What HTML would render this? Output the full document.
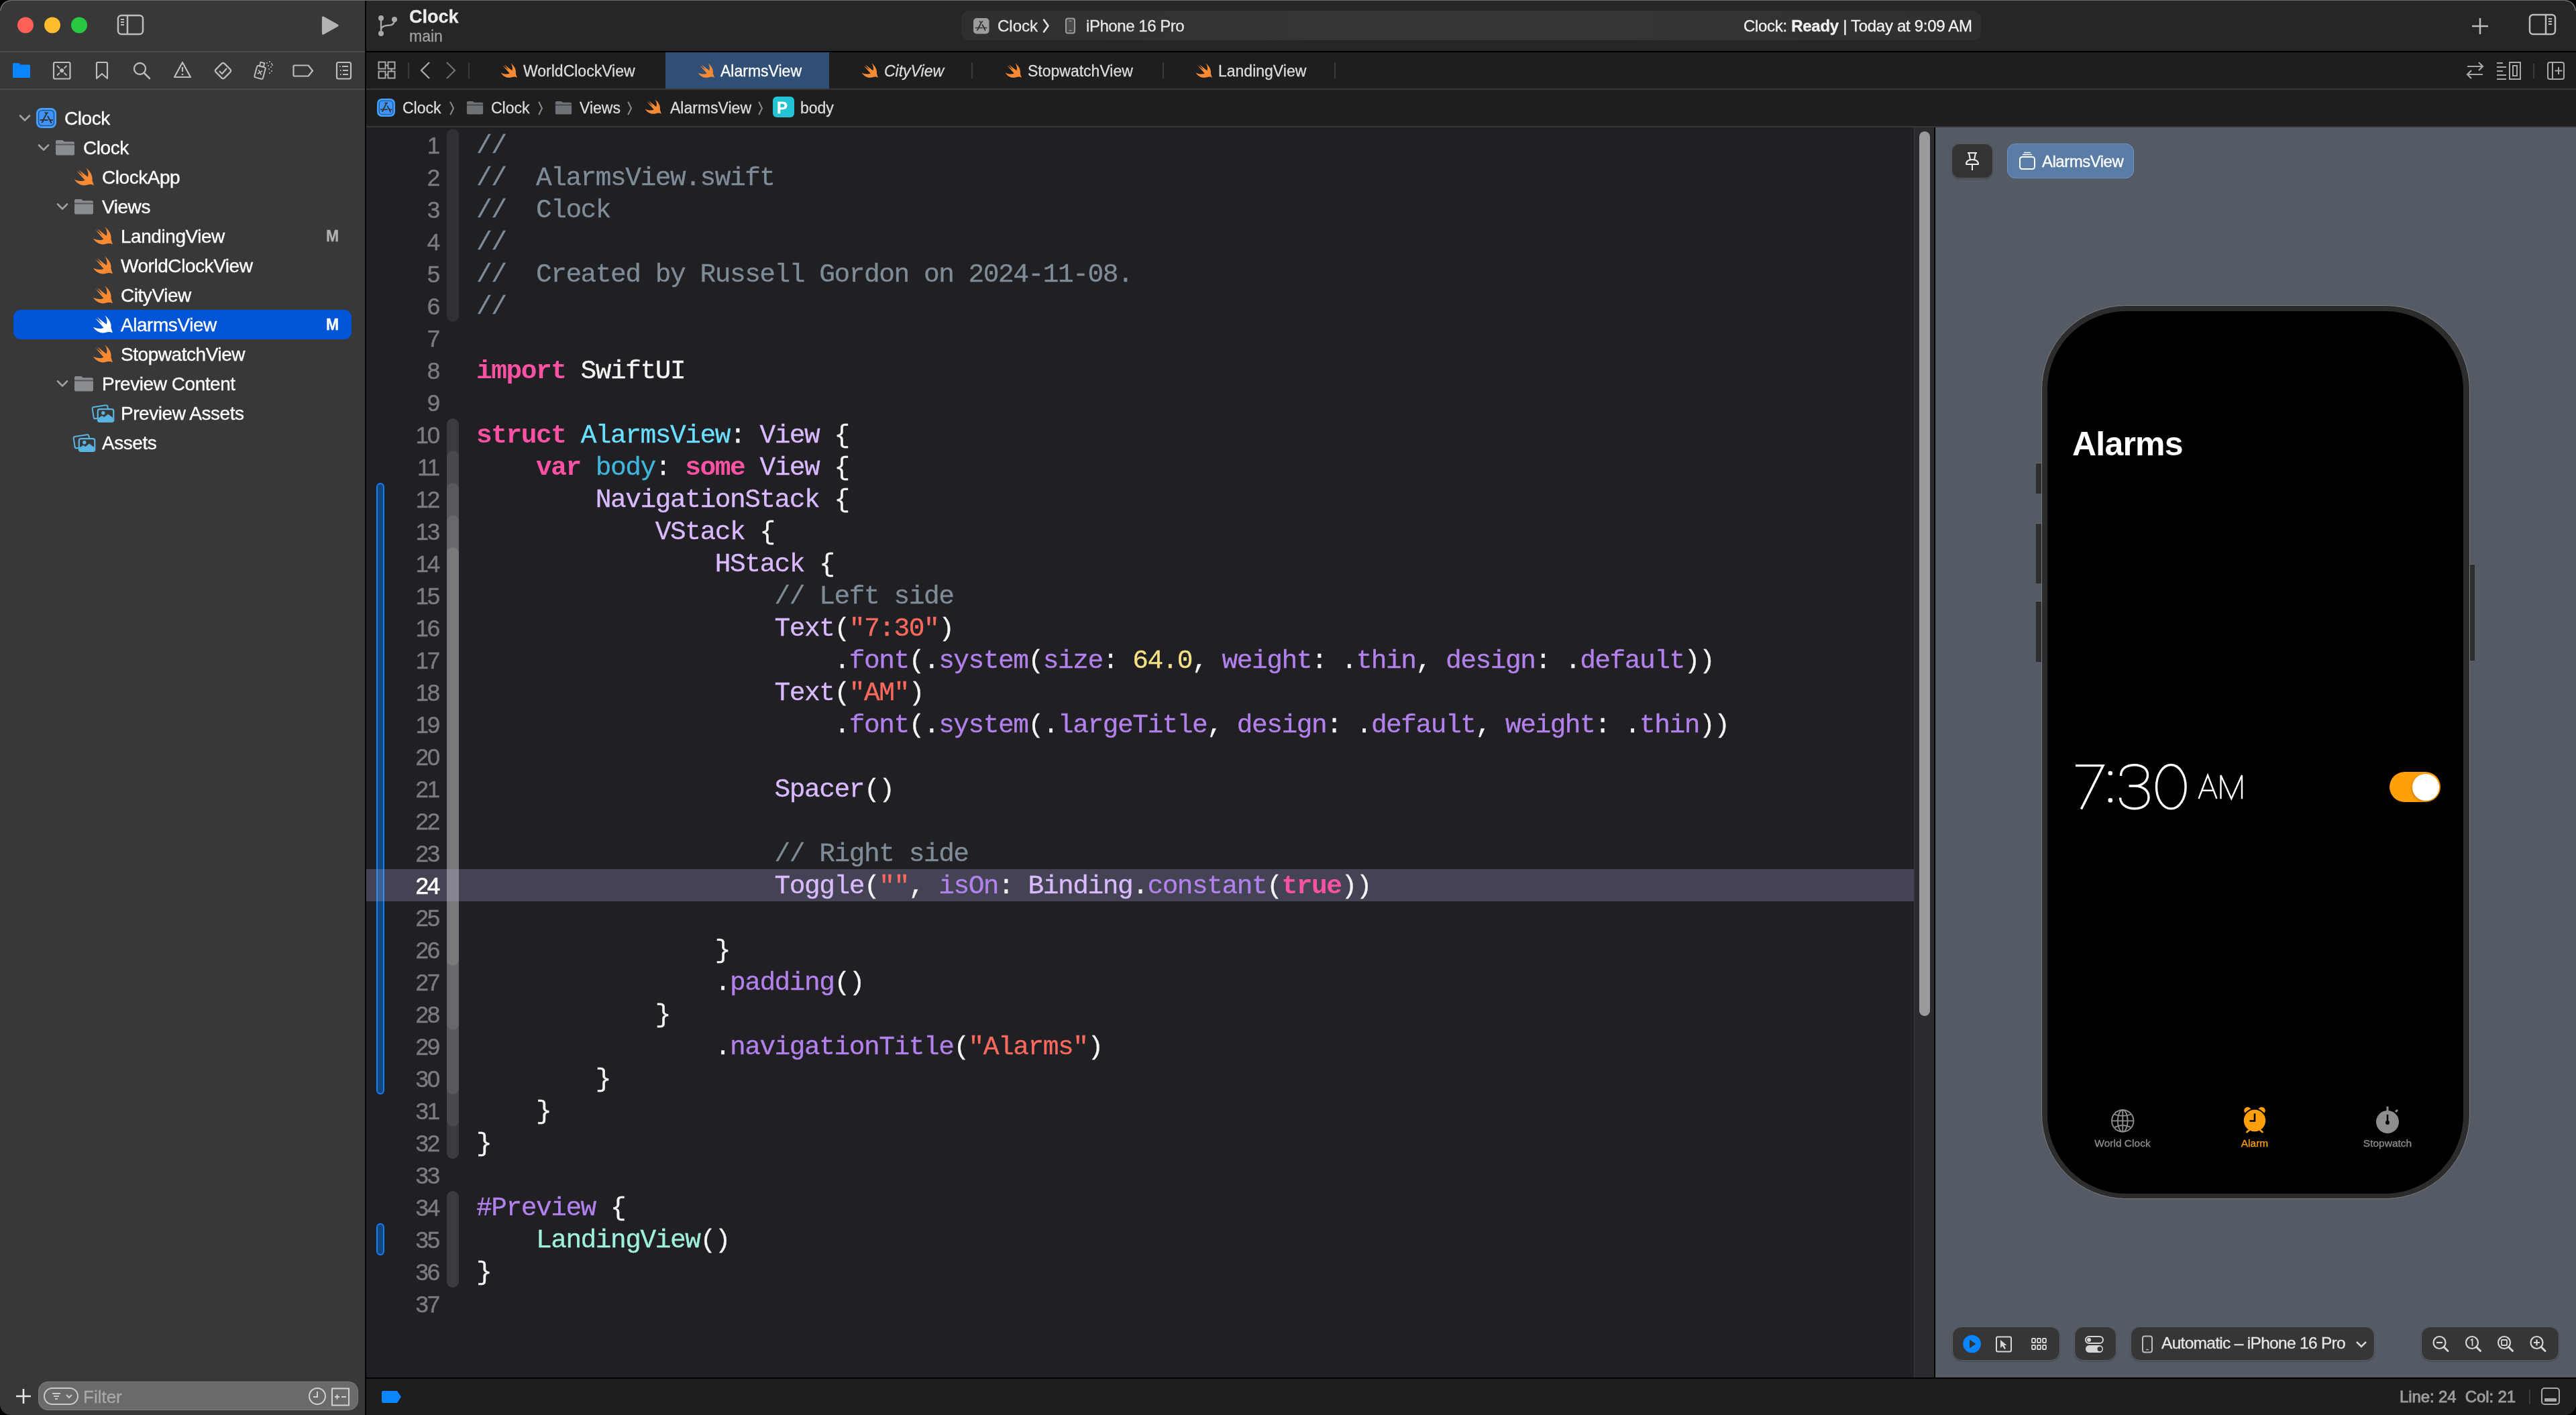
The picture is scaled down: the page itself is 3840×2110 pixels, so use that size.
<!DOCTYPE html>
<html><head><meta charset="utf-8"><title>Xcode</title><style>
*{margin:0;padding:0;box-sizing:border-box}
html,body{width:3840px;height:2110px;overflow:hidden;background:#1e1e1e;font-family:'Liberation Sans', sans-serif;}
.a{position:absolute}
.t{position:absolute;white-space:pre;line-height:1;-webkit-text-stroke-width:0.3px}
</style></head>
<body><div style="position:absolute;left:0;top:0;width:3840px;height:2110px;will-change:transform">
<div class="a" style="left:0px;top:0px;width:544px;height:2110px;background:#383838;"></div>
<div class="a" style="left:544px;top:0px;width:2px;height:2110px;background:#000;"></div>
<svg class="a" style="left:0px;top:0px;" width="160" height="76" viewBox="0 0 160 76"><circle cx="38" cy="37.6" r="12" fill="#ff5f57"/><circle cx="78" cy="37.6" r="12" fill="#febc2e"/><circle cx="118" cy="37.6" r="12" fill="#28c840"/></svg>
<svg class="a" style="left:170px;top:18px;" width="50" height="40" viewBox="0 0 50 40"><rect x="6" y="5" width="37" height="28" rx="5" fill="none" stroke="#bdbdbd" stroke-width="2.5"/><line x1="20" y1="5" x2="20" y2="33" stroke="#bdbdbd" stroke-width="2.5"/><line x1="10" y1="11" x2="15" y2="11" stroke="#bdbdbd" stroke-width="2"/><line x1="10" y1="15" x2="15" y2="15" stroke="#bdbdbd" stroke-width="2"/><line x1="10" y1="19" x2="15" y2="19" stroke="#bdbdbd" stroke-width="2"/></svg>
<svg class="a" style="left:470px;top:18px;" width="44" height="40" viewBox="0 0 44 40"><path d="M11.5 8 L33 20 L11.5 32 Z" fill="#b4b4b4" stroke="#b4b4b4" stroke-width="3.2" stroke-linejoin="round"/></svg>
<div class="a" style="left:0px;top:76px;width:544px;height:2px;background:#4a4a4a;"></div>
<div class="a" style="left:0px;top:132px;width:544px;height:2px;background:#4a4a4a;"></div>
<svg class="a" style="left:0px;top:0px;" width="544" height="134" viewBox="0 0 544 134"><path d="M19 95.5 Q19 94 20.5 94 L28 94 L31 96.5 L43.5 96.5 Q45 96.5 45 98 L45 114.5 Q45 116 43.5 116 L20.5 116 Q19 116 19 114.5 Z" fill="#0a84ff"/><rect x="19" y="98.5" width="26" height="17.5" rx="1.5" fill="#0a84ff"/><rect x="80" y="93" width="24.5" height="24.5" rx="2" fill="none" stroke="#bdbdbd" stroke-width="2.2"/><circle cx="92.2" cy="105.2" r="3" fill="#bdbdbd"/><path d="M85 98 L89 102 M99.5 98 L95.5 102 M85 112.5 L89 108.5 M99.5 112.5 L95.5 108.5" stroke="#bdbdbd" stroke-width="1.8"/><path d="M144 94.5 Q144 93 145.5 93 L158.5 93 Q160 93 160 94.5 L160 117 L152 110 L144 117 Z" fill="none" stroke="#bdbdbd" stroke-width="2.2" stroke-linejoin="round"/><circle cx="208.5" cy="102.5" r="8.5" fill="none" stroke="#bdbdbd" stroke-width="2.3"/><line x1="214.5" y1="108.5" x2="223" y2="117" stroke="#bdbdbd" stroke-width="2.5" stroke-linecap="round"/><path d="M272 93 L284 115 L260 115 Z" fill="none" stroke="#bdbdbd" stroke-width="2.2" stroke-linejoin="round"/><line x1="272" y1="100" x2="272" y2="107" stroke="#bdbdbd" stroke-width="2.2"/><circle cx="272" cy="111" r="1.3" fill="#bdbdbd"/><rect x="323.5" y="96.5" width="18" height="18" rx="3" transform="rotate(45 332.5 105.5)" fill="none" stroke="#bdbdbd" stroke-width="2.2"/><path d="M327 106 L331 110 L338 102" fill="none" stroke="#bdbdbd" stroke-width="2.2"/><g transform="rotate(15 388 108)"><rect x="381" y="99" width="13" height="18" rx="2" fill="none" stroke="#bdbdbd" stroke-width="2"/><rect x="384.5" y="93" width="6" height="6" fill="none" stroke="#bdbdbd" stroke-width="1.8"/><path d="M384.5 105 L390.5 111 M390.5 105 L384.5 111" stroke="#bdbdbd" stroke-width="1.6"/></g><g fill="#bdbdbd"><circle cx="398" cy="94" r="1"/><circle cx="402" cy="92" r="1"/><circle cx="405" cy="95" r="1"/><circle cx="400" cy="98" r="1"/><circle cx="404" cy="100" r="1"/><circle cx="401" cy="103" r="1"/><circle cx="405" cy="106" r="1"/><circle cx="402" cy="109" r="1"/><circle cx="406" cy="97" r="1"/></g><path d="M439 97.5 Q437.5 97.5 437.5 99 L437.5 112 Q437.5 113.5 439 113.5 L459.5 113.5 L466 105.5 L459.5 97.5 Z" fill="none" stroke="#bdbdbd" stroke-width="2.2" stroke-linejoin="round"/><rect x="502" y="93" width="21" height="24.5" rx="2.5" fill="none" stroke="#bdbdbd" stroke-width="2.2"/><g stroke="#bdbdbd" stroke-width="2"><line x1="506" y1="99" x2="507.5" y2="99"/><line x1="510" y1="99" x2="519" y2="99"/><line x1="507" y1="105" x2="508.5" y2="105"/><line x1="511" y1="105" x2="519" y2="105"/><line x1="507" y1="111" x2="508.5" y2="111"/><line x1="511" y1="111" x2="519" y2="111"/></g></svg>
<div class="a" style="left:20px;top:462px;width:504px;height:44px;background:#0054d6;border-radius:11px"></div>
<svg class="a" style="left:28px;top:170px" width="18" height="12" viewBox="0 0 18 12"><path d="M2 2.5 L9 9.5 L16 2.5" fill="none" stroke="#a0a0a0" stroke-width="2.6" stroke-linecap="round" stroke-linejoin="round"/></svg>
<svg class="a" style="left:54px;top:161px" width="30" height="30" viewBox="0 0 30 30"><rect x="1" y="1" width="28" height="28" rx="7" fill="#3f95fd" stroke="#45a2ff" stroke-width="2"/><rect x="3.6" y="3.6" width="22.8" height="22.8" rx="5" fill="none" stroke="#24507f" stroke-width="1.3"/><path d="M13.4 7 L15.2 8.8 M16.9 7 L15.2 8.8 L10.7 17.2 M17.4 12.6 L22.3 22 M6.6 18.1 L16.8 18.1 M20.4 18.1 L24 18.1 M8.6 21.3 L10.2 19.8" stroke="#333" stroke-width="2" stroke-linecap="round" fill="none"/></svg>
<div class="t" style="left:96px;top:162.79px;font-size:28px;color:#ffffff;font-weight:400;font-family:'Liberation Sans', sans-serif;letter-spacing:-0.45px;-webkit-text-stroke:0.35px #fff">Clock</div>
<svg class="a" style="left:56px;top:214px" width="18" height="12" viewBox="0 0 18 12"><path d="M2 2.5 L9 9.5 L16 2.5" fill="none" stroke="#a0a0a0" stroke-width="2.6" stroke-linecap="round" stroke-linejoin="round"/></svg>
<svg class="a" style="left:82px;top:208px" width="30" height="24" viewBox="0 0 30 24" preserveAspectRatio="none"><path d="M1 3 Q1 1 3 1 L10.5 1 Q11.5 1 12.5 2 L14 3.2 L27 3.2 Q29 3.2 29 5.2 L29 21.5 Q29 23.5 27 23.5 L3 23.5 Q1 23.5 1 21.5 Z" fill="#888b8f"/><rect x="1" y="6.5" width="28" height="2" fill="#000" fill-opacity="0.38"/></svg>
<div class="t" style="left:124px;top:206.79px;font-size:28px;color:#ffffff;font-weight:400;font-family:'Liberation Sans', sans-serif;letter-spacing:-0.45px;-webkit-text-stroke:0.35px #fff">Clock</div>
<svg class="a" style="left:110px;top:249px" width="30" height="30" viewBox="0 0 30 30"><path d="M18.5 1.5 C24 6 28.5 12 27.5 20 L30 27.5 C27 25.5 24 25.5 19 27 C12 28.5 5 25.5 0.8 18.5 C5 21 12 22 16.5 19.8 L4 5.5 L14.6 13.6 L7 4 L20.8 14.8 C22.3 11 21.5 6 18.5 1.5 Z" fill="#f88a34"/></svg>
<div class="t" style="left:152px;top:250.79px;font-size:28px;color:#ffffff;font-weight:400;font-family:'Liberation Sans', sans-serif;letter-spacing:-0.45px;-webkit-text-stroke:0.35px #fff">ClockApp</div>
<svg class="a" style="left:84px;top:302px" width="18" height="12" viewBox="0 0 18 12"><path d="M2 2.5 L9 9.5 L16 2.5" fill="none" stroke="#a0a0a0" stroke-width="2.6" stroke-linecap="round" stroke-linejoin="round"/></svg>
<svg class="a" style="left:110px;top:296px" width="30" height="24" viewBox="0 0 30 24" preserveAspectRatio="none"><path d="M1 3 Q1 1 3 1 L10.5 1 Q11.5 1 12.5 2 L14 3.2 L27 3.2 Q29 3.2 29 5.2 L29 21.5 Q29 23.5 27 23.5 L3 23.5 Q1 23.5 1 21.5 Z" fill="#888b8f"/><rect x="1" y="6.5" width="28" height="2" fill="#000" fill-opacity="0.38"/></svg>
<div class="t" style="left:152px;top:294.79px;font-size:28px;color:#ffffff;font-weight:400;font-family:'Liberation Sans', sans-serif;letter-spacing:-0.45px;-webkit-text-stroke:0.35px #fff">Views</div>
<svg class="a" style="left:138px;top:337px" width="30" height="30" viewBox="0 0 30 30"><path d="M18.5 1.5 C24 6 28.5 12 27.5 20 L30 27.5 C27 25.5 24 25.5 19 27 C12 28.5 5 25.5 0.8 18.5 C5 21 12 22 16.5 19.8 L4 5.5 L14.6 13.6 L7 4 L20.8 14.8 C22.3 11 21.5 6 18.5 1.5 Z" fill="#f88a34"/></svg>
<div class="t" style="left:180px;top:338.79px;font-size:28px;color:#ffffff;font-weight:400;font-family:'Liberation Sans', sans-serif;letter-spacing:-0.45px;-webkit-text-stroke:0.35px #fff">LandingView</div>
<div class="t" style="left:486px;top:341.03px;font-size:23px;color:#b0b0b0;font-weight:700;font-family:'Liberation Sans', sans-serif;">M</div>
<svg class="a" style="left:138px;top:381px" width="30" height="30" viewBox="0 0 30 30"><path d="M18.5 1.5 C24 6 28.5 12 27.5 20 L30 27.5 C27 25.5 24 25.5 19 27 C12 28.5 5 25.5 0.8 18.5 C5 21 12 22 16.5 19.8 L4 5.5 L14.6 13.6 L7 4 L20.8 14.8 C22.3 11 21.5 6 18.5 1.5 Z" fill="#f88a34"/></svg>
<div class="t" style="left:180px;top:382.79px;font-size:28px;color:#ffffff;font-weight:400;font-family:'Liberation Sans', sans-serif;letter-spacing:-0.45px;-webkit-text-stroke:0.35px #fff">WorldClockView</div>
<svg class="a" style="left:138px;top:425px" width="30" height="30" viewBox="0 0 30 30"><path d="M18.5 1.5 C24 6 28.5 12 27.5 20 L30 27.5 C27 25.5 24 25.5 19 27 C12 28.5 5 25.5 0.8 18.5 C5 21 12 22 16.5 19.8 L4 5.5 L14.6 13.6 L7 4 L20.8 14.8 C22.3 11 21.5 6 18.5 1.5 Z" fill="#f88a34"/></svg>
<div class="t" style="left:180px;top:426.79px;font-size:28px;color:#ffffff;font-weight:400;font-family:'Liberation Sans', sans-serif;letter-spacing:-0.45px;-webkit-text-stroke:0.35px #fff">CityView</div>
<svg class="a" style="left:138px;top:469px" width="30" height="30" viewBox="0 0 30 30"><path d="M18.5 1.5 C24 6 28.5 12 27.5 20 L30 27.5 C27 25.5 24 25.5 19 27 C12 28.5 5 25.5 0.8 18.5 C5 21 12 22 16.5 19.8 L4 5.5 L14.6 13.6 L7 4 L20.8 14.8 C22.3 11 21.5 6 18.5 1.5 Z" fill="#ffffff"/></svg>
<div class="t" style="left:180px;top:470.79px;font-size:28px;color:#ffffff;font-weight:400;font-family:'Liberation Sans', sans-serif;letter-spacing:-0.45px;-webkit-text-stroke:0.35px #fff">AlarmsView</div>
<div class="t" style="left:486px;top:473.03px;font-size:23px;color:#ffffff;font-weight:700;font-family:'Liberation Sans', sans-serif;">M</div>
<svg class="a" style="left:138px;top:513px" width="30" height="30" viewBox="0 0 30 30"><path d="M18.5 1.5 C24 6 28.5 12 27.5 20 L30 27.5 C27 25.5 24 25.5 19 27 C12 28.5 5 25.5 0.8 18.5 C5 21 12 22 16.5 19.8 L4 5.5 L14.6 13.6 L7 4 L20.8 14.8 C22.3 11 21.5 6 18.5 1.5 Z" fill="#f88a34"/></svg>
<div class="t" style="left:180px;top:514.79px;font-size:28px;color:#ffffff;font-weight:400;font-family:'Liberation Sans', sans-serif;letter-spacing:-0.45px;-webkit-text-stroke:0.35px #fff">StopwatchView</div>
<svg class="a" style="left:84px;top:566px" width="18" height="12" viewBox="0 0 18 12"><path d="M2 2.5 L9 9.5 L16 2.5" fill="none" stroke="#a0a0a0" stroke-width="2.6" stroke-linecap="round" stroke-linejoin="round"/></svg>
<svg class="a" style="left:110px;top:560px" width="30" height="24" viewBox="0 0 30 24" preserveAspectRatio="none"><path d="M1 3 Q1 1 3 1 L10.5 1 Q11.5 1 12.5 2 L14 3.2 L27 3.2 Q29 3.2 29 5.2 L29 21.5 Q29 23.5 27 23.5 L3 23.5 Q1 23.5 1 21.5 Z" fill="#888b8f"/><rect x="1" y="6.5" width="28" height="2" fill="#000" fill-opacity="0.38"/></svg>
<div class="t" style="left:152px;top:558.79px;font-size:28px;color:#ffffff;font-weight:400;font-family:'Liberation Sans', sans-serif;letter-spacing:-0.45px;-webkit-text-stroke:0.35px #fff">Preview Content</div>
<svg class="a" style="left:135px;top:602px" width="38" height="30" viewBox="0 0 38 30"><rect x="3.5" y="3.5" width="23" height="17.5" rx="2.5" transform="rotate(-9 15 12)" fill="none" stroke="#5ab4e0" stroke-width="2"/><rect x="10.8" y="8.2" width="23.5" height="18.8" rx="3" fill="#383838" stroke="#5ab4e0" stroke-width="2.2"/><circle cx="18.8" cy="13.8" r="2.7" fill="#5ab4e0"/><path d="M11.5 26 L11.5 21.5 L17 18 L20.5 20 L26 15.5 L33.5 21 L33.5 26 Z" fill="#5ab4e0"/></svg>
<div class="t" style="left:180px;top:602.79px;font-size:28px;color:#ffffff;font-weight:400;font-family:'Liberation Sans', sans-serif;letter-spacing:-0.45px;-webkit-text-stroke:0.35px #fff">Preview Assets</div>
<svg class="a" style="left:107px;top:646px" width="38" height="30" viewBox="0 0 38 30"><rect x="3.5" y="3.5" width="23" height="17.5" rx="2.5" transform="rotate(-9 15 12)" fill="none" stroke="#5ab4e0" stroke-width="2"/><rect x="10.8" y="8.2" width="23.5" height="18.8" rx="3" fill="#383838" stroke="#5ab4e0" stroke-width="2.2"/><circle cx="18.8" cy="13.8" r="2.7" fill="#5ab4e0"/><path d="M11.5 26 L11.5 21.5 L17 18 L20.5 20 L26 15.5 L33.5 21 L33.5 26 Z" fill="#5ab4e0"/></svg>
<div class="t" style="left:152px;top:646.79px;font-size:28px;color:#ffffff;font-weight:400;font-family:'Liberation Sans', sans-serif;letter-spacing:-0.45px;-webkit-text-stroke:0.35px #fff">Assets</div>
<div class="a" style="left:57px;top:2060px;width:477px;height:43px;background:#6a6a6a;border:1px solid #7c7c7c;border-radius:14px"></div>
<svg class="a" style="left:20px;top:2068px;" width="30" height="30" viewBox="0 0 30 30"><path d="M4 14 L26 14 M15 3 L15 25" stroke="#e6e6e6" stroke-width="2.6"/></svg>
<div class="a" style="left:65px;top:2069px;width:52px;height:26px;border:2px solid #c9c9c9;border-radius:13px"></div>
<svg class="a" style="left:65px;top:2069px;" width="52" height="26" viewBox="0 0 52 26"><path d="M13 9 L25 9 M15 13 L23 13 M17 17 L21 17" stroke="#c9c9c9" stroke-width="1.8"/><path d="M34 11 L38 15 L42 11" fill="none" stroke="#c9c9c9" stroke-width="2"/></svg>
<div class="t" style="left:124px;top:2069.99px;font-size:26px;color:#a8a8a8;font-weight:400;font-family:'Liberation Sans', sans-serif;">Filter</div>
<svg class="a" style="left:458px;top:2068px;" width="30" height="30" viewBox="0 0 30 30"><circle cx="15" cy="14" r="12" fill="none" stroke="#d0d0d0" stroke-width="2"/><path d="M15 7 L15 15 L9 15" fill="none" stroke="#d0d0d0" stroke-width="2"/></svg>
<svg class="a" style="left:493px;top:2069px;" width="30" height="30" viewBox="0 0 30 30"><rect x="2" y="1.5" width="25" height="25" fill="none" stroke="#d0d0d0" stroke-width="2"/><path d="M6 14 L13 14 M9.5 10.5 L9.5 17.5 M16 14 L23 14" stroke="#d0d0d0" stroke-width="2"/></svg>
<div class="a" style="left:546px;top:0px;width:3294px;height:76px;background:#262626;"></div>
<div class="a" style="left:546px;top:76px;width:3294px;height:2px;background:#000;"></div>
<svg class="a" style="left:560px;top:18px;" width="40" height="40" viewBox="0 0 40 40"><circle cx="8" cy="9" r="4" fill="#a8a8a8"/><circle cx="8" cy="32" r="4" fill="#a8a8a8"/><circle cx="28" cy="11" r="4" fill="#a8a8a8"/><path d="M8 9 L8 32 M8 27 C8 21 14 20 22 19.5 C26 19 28 16 28 11" fill="none" stroke="#a8a8a8" stroke-width="2.4"/></svg>
<div class="t" style="left:610px;top:12.14px;font-size:27px;color:#ececec;font-weight:700;font-family:'Liberation Sans', sans-serif;">Clock</div>
<div class="t" style="left:610px;top:42.53px;font-size:23px;color:#a0a0a0;font-weight:400;font-family:'Liberation Sans', sans-serif;">main</div>
<div class="a" style="left:1433px;top:16px;width:1520px;height:44px;border-radius:12px;background:linear-gradient(90deg,#2f2f2f,#363636 40%,#363636 60%,#2f2f2f)"></div>
<svg class="a" style="left:1450px;top:26px;" width="26" height="26" viewBox="0 0 26 26"><rect x="1" y="1" width="23.5" height="23.5" rx="5" fill="#9c9c9c"/><path d="M10.5 6 L12.5 8 M14.5 6 L12.5 8 L8.5 16 M14.5 11 L18.5 19 M4.5 15.5 L14 15.5 M17 15.5 L20.5 15.5 M6.5 19 L8 17.5" stroke="#2e2e2e" stroke-width="1.7" stroke-linecap="round" fill="none"/></svg>
<div class="t" style="left:1487px;top:26.68px;font-size:24px;color:#e6e6e6;font-weight:400;font-family:'Liberation Sans', sans-serif;">Clock</div>
<svg class="a" style="left:1553px;top:27px;" width="14" height="24" viewBox="0 0 14 24"><path d="M3 2.5 L9.5 11.5 L3 20.5" fill="none" stroke="#e6e6e6" stroke-width="2.6" stroke-linecap="round" stroke-linejoin="round"/></svg>
<svg class="a" style="left:1586px;top:25px;" width="20" height="28" viewBox="0 0 20 28"><rect x="3" y="2.5" width="13" height="22" rx="3" fill="#4a4a4a" stroke="#9c9c9c" stroke-width="2"/><line x1="7.5" y1="6.5" x2="11.5" y2="6.5" stroke="#9c9c9c" stroke-width="1.2"/><line x1="7.5" y1="20.5" x2="11.5" y2="20.5" stroke="#9c9c9c" stroke-width="1.2"/></svg>
<div class="t" style="left:1619px;top:26.68px;font-size:24px;color:#e6e6e6;font-weight:400;font-family:'Liberation Sans', sans-serif;letter-spacing:-0.45px">iPhone 16 Pro</div>
<div class="t" style="left:2599px;top:26.7px;font-size:24px;color:#f2f2f2;letter-spacing:-0.3px">Clock: <b>Ready</b> | Today at 9:09 AM</div>
<svg class="a" style="left:3680px;top:22px;" width="34" height="34" viewBox="0 0 34 34"><path d="M17 5 L17 29 M5 17 L29 17" stroke="#bdbdbd" stroke-width="2.5"/></svg>
<svg class="a" style="left:3766px;top:18px;" width="48" height="40" viewBox="0 0 48 40"><rect x="5" y="4" width="38" height="29" rx="5" fill="none" stroke="#bdbdbd" stroke-width="2.5"/><line x1="29" y1="4" x2="29" y2="33" stroke="#bdbdbd" stroke-width="2.5"/><line x1="33" y1="10" x2="38" y2="10" stroke="#bdbdbd" stroke-width="2"/><line x1="33" y1="14" x2="38" y2="14" stroke="#bdbdbd" stroke-width="2"/><line x1="33" y1="18" x2="38" y2="18" stroke="#bdbdbd" stroke-width="2"/></svg>
<div class="a" style="left:546px;top:78px;width:3294px;height:54px;background:#1e1e1e;"></div>
<div class="a" style="left:546px;top:132px;width:3294px;height:2px;background:#353535;"></div>
<svg class="a" style="left:560px;top:88px;" width="36" height="34" viewBox="0 0 36 34"><g fill="none" stroke="#a8a8a8" stroke-width="2"><rect x="4.5" y="4.5" width="10" height="10"/><rect x="18.5" y="4.5" width="10" height="10"/><rect x="4.5" y="18.5" width="10" height="10"/><rect x="18.5" y="18.5" width="10" height="10"/></g><path d="M14.5 9.5 L18.5 9.5 M23.5 14.5 L23.5 18.5 M14.5 23.5 L18.5 23.5" stroke="#a8a8a8" stroke-width="2"/></svg>
<div class="a" style="left:608px;top:93px;width:2px;height:24px;background:#3a3a3a;"></div>
<svg class="a" style="left:620px;top:88px;" width="66" height="34" viewBox="0 0 66 34"><path d="M20 5 L8 17 L20 29" fill="none" stroke="#a8a8a8" stroke-width="2.4"/><path d="M46 5 L58 17 L46 29" fill="none" stroke="#6e6e6e" stroke-width="2.4"/></svg>
<div class="a" style="left:698px;top:93px;width:2px;height:24px;background:#3a3a3a;"></div>
<div class="a" style="left:992px;top:78px;width:244px;height:54px;background:#2f4f74;"></div>
<div class="a" style="left:1448px;top:93px;width:2px;height:24px;background:#3a3a3a;"></div>
<div class="a" style="left:1733px;top:93px;width:2px;height:24px;background:#3a3a3a;"></div>
<div class="a" style="left:1989px;top:93px;width:2px;height:24px;background:#3a3a3a;"></div>
<svg class="a" style="left:746px;top:93px" width="25" height="25" viewBox="0 0 30 30"><path d="M18.5 1.5 C24 6 28.5 12 27.5 20 L30 27.5 C27 25.5 24 25.5 19 27 C12 28.5 5 25.5 0.8 18.5 C5 21 12 22 16.5 19.8 L4 5.5 L14.6 13.6 L7 4 L20.8 14.8 C22.3 11 21.5 6 18.5 1.5 Z" fill="#f88a34"/></svg>
<div class="t" style="left:780px;top:94.53px;font-size:23px;color:#dcdcdc;font-weight:400;font-family:'Liberation Sans', sans-serif;">WorldClockView</div>
<svg class="a" style="left:1040px;top:93px" width="25" height="25" viewBox="0 0 30 30"><path d="M18.5 1.5 C24 6 28.5 12 27.5 20 L30 27.5 C27 25.5 24 25.5 19 27 C12 28.5 5 25.5 0.8 18.5 C5 21 12 22 16.5 19.8 L4 5.5 L14.6 13.6 L7 4 L20.8 14.8 C22.3 11 21.5 6 18.5 1.5 Z" fill="#f88a34"/></svg>
<div class="t" style="left:1074px;top:94.53px;font-size:23px;color:#ffffff;font-weight:400;font-family:'Liberation Sans', sans-serif;">AlarmsView</div>
<svg class="a" style="left:1284px;top:93px" width="25" height="25" viewBox="0 0 30 30"><path d="M18.5 1.5 C24 6 28.5 12 27.5 20 L30 27.5 C27 25.5 24 25.5 19 27 C12 28.5 5 25.5 0.8 18.5 C5 21 12 22 16.5 19.8 L4 5.5 L14.6 13.6 L7 4 L20.8 14.8 C22.3 11 21.5 6 18.5 1.5 Z" fill="#f88a34"/></svg>
<div class="t" style="left:1318px;top:94.53px;font-size:23px;color:#dcdcdc;font-weight:400;font-family:'Liberation Sans', sans-serif;font-style:italic;">CityView</div>
<svg class="a" style="left:1498px;top:93px" width="25" height="25" viewBox="0 0 30 30"><path d="M18.5 1.5 C24 6 28.5 12 27.5 20 L30 27.5 C27 25.5 24 25.5 19 27 C12 28.5 5 25.5 0.8 18.5 C5 21 12 22 16.5 19.8 L4 5.5 L14.6 13.6 L7 4 L20.8 14.8 C22.3 11 21.5 6 18.5 1.5 Z" fill="#f88a34"/></svg>
<div class="t" style="left:1532px;top:94.53px;font-size:23px;color:#dcdcdc;font-weight:400;font-family:'Liberation Sans', sans-serif;">StopwatchView</div>
<svg class="a" style="left:1782px;top:93px" width="25" height="25" viewBox="0 0 30 30"><path d="M18.5 1.5 C24 6 28.5 12 27.5 20 L30 27.5 C27 25.5 24 25.5 19 27 C12 28.5 5 25.5 0.8 18.5 C5 21 12 22 16.5 19.8 L4 5.5 L14.6 13.6 L7 4 L20.8 14.8 C22.3 11 21.5 6 18.5 1.5 Z" fill="#f88a34"/></svg>
<div class="t" style="left:1816px;top:94.53px;font-size:23px;color:#dcdcdc;font-weight:400;font-family:'Liberation Sans', sans-serif;">LandingView</div>
<svg class="a" style="left:3668px;top:86px;" width="172" height="40" viewBox="0 0 172 40"><path d="M10 13 L33 13 M27 7 L33 13 L27 19" fill="none" stroke="#a8a8a8" stroke-width="2.2"/><path d="M33 25 L10 25 M16 19 L10 25 L16 31" fill="none" stroke="#a8a8a8" stroke-width="2.2"/><g stroke="#a8a8a8" stroke-width="2"><line x1="54" y1="8" x2="63" y2="8"/><line x1="54" y1="14" x2="68" y2="14"/><line x1="54" y1="20" x2="63" y2="20"/><line x1="54" y1="26" x2="68" y2="26"/><line x1="54" y1="32" x2="68" y2="32"/></g><rect x="73" y="7" width="16" height="25" fill="none" stroke="#a8a8a8" stroke-width="2"/><rect x="78" y="12" width="6" height="15" fill="none" stroke="#a8a8a8" stroke-width="2"/><line x1="109" y1="9" x2="109" y2="31" stroke="#3a3a3a" stroke-width="2"/><rect x="130" y="7" width="24" height="25" rx="3" fill="none" stroke="#a8a8a8" stroke-width="2"/><line x1="137" y1="7" x2="137" y2="32" stroke="#a8a8a8" stroke-width="2"/><path d="M146 14 L146 25 M140.5 19.5 L151.5 19.5" stroke="#a8a8a8" stroke-width="2"/></svg>
<div class="a" style="left:546px;top:134px;width:3294px;height:54px;background:#1e1e1e;"></div>
<div class="a" style="left:546px;top:188px;width:3294px;height:2px;background:#353535;"></div>
<svg class="a" style="left:562px;top:147px" width="27" height="27" viewBox="0 0 30 30"><rect x="1" y="1" width="28" height="28" rx="7" fill="#3f95fd" stroke="#45a2ff" stroke-width="2"/><rect x="3.6" y="3.6" width="22.8" height="22.8" rx="5" fill="none" stroke="#24507f" stroke-width="1.3"/><path d="M13.4 7 L15.2 8.8 M16.9 7 L15.2 8.8 L10.7 17.2 M17.4 12.6 L22.3 22 M6.6 18.1 L16.8 18.1 M20.4 18.1 L24 18.1 M8.6 21.3 L10.2 19.8" stroke="#333" stroke-width="2" stroke-linecap="round" fill="none"/></svg>
<div class="t" style="left:600px;top:149.53px;font-size:23px;color:#dcdcdc;font-weight:400;font-family:'Liberation Sans', sans-serif;">Clock</div>
<svg class="a" style="left:669px;top:150px;" width="10" height="24" viewBox="0 0 10 24"><path d="M2.5 2.5 L7 11.5 L2.5 20.5" fill="none" stroke="#8c8c8c" stroke-width="2" stroke-linecap="round" stroke-linejoin="round"/></svg>
<svg class="a" style="left:695px;top:150px" width="26" height="21" viewBox="0 0 30 24" preserveAspectRatio="none"><path d="M1 3 Q1 1 3 1 L10.5 1 Q11.5 1 12.5 2 L14 3.2 L27 3.2 Q29 3.2 29 5.2 L29 21.5 Q29 23.5 27 23.5 L3 23.5 Q1 23.5 1 21.5 Z" fill="#6e7276"/><rect x="1" y="6.5" width="28" height="2" fill="#000" fill-opacity="0.38"/></svg>
<div class="t" style="left:732px;top:149.53px;font-size:23px;color:#dcdcdc;font-weight:400;font-family:'Liberation Sans', sans-serif;">Clock</div>
<svg class="a" style="left:801px;top:150px;" width="10" height="24" viewBox="0 0 10 24"><path d="M2.5 2.5 L7 11.5 L2.5 20.5" fill="none" stroke="#8c8c8c" stroke-width="2" stroke-linecap="round" stroke-linejoin="round"/></svg>
<svg class="a" style="left:827px;top:150px" width="26" height="21" viewBox="0 0 30 24" preserveAspectRatio="none"><path d="M1 3 Q1 1 3 1 L10.5 1 Q11.5 1 12.5 2 L14 3.2 L27 3.2 Q29 3.2 29 5.2 L29 21.5 Q29 23.5 27 23.5 L3 23.5 Q1 23.5 1 21.5 Z" fill="#6e7276"/><rect x="1" y="6.5" width="28" height="2" fill="#000" fill-opacity="0.38"/></svg>
<div class="t" style="left:864px;top:149.53px;font-size:23px;color:#dcdcdc;font-weight:400;font-family:'Liberation Sans', sans-serif;">Views</div>
<svg class="a" style="left:934px;top:150px;" width="10" height="24" viewBox="0 0 10 24"><path d="M2.5 2.5 L7 11.5 L2.5 20.5" fill="none" stroke="#8c8c8c" stroke-width="2" stroke-linecap="round" stroke-linejoin="round"/></svg>
<svg class="a" style="left:961px;top:147px" width="25" height="25" viewBox="0 0 30 30"><path d="M18.5 1.5 C24 6 28.5 12 27.5 20 L30 27.5 C27 25.5 24 25.5 19 27 C12 28.5 5 25.5 0.8 18.5 C5 21 12 22 16.5 19.8 L4 5.5 L14.6 13.6 L7 4 L20.8 14.8 C22.3 11 21.5 6 18.5 1.5 Z" fill="#f88a34"/></svg>
<div class="t" style="left:999px;top:149.53px;font-size:23px;color:#dcdcdc;font-weight:400;font-family:'Liberation Sans', sans-serif;">AlarmsView</div>
<svg class="a" style="left:1129px;top:150px;" width="10" height="24" viewBox="0 0 10 24"><path d="M2.5 2.5 L7 11.5 L2.5 20.5" fill="none" stroke="#8c8c8c" stroke-width="2" stroke-linecap="round" stroke-linejoin="round"/></svg>
<div class="a" style="left:1152px;top:144px;width:32px;height:31px;background:#25c2d4;border-radius:6px"></div>
<div class="t" style="left:1158px;top:148.68px;font-size:24px;color:#ffffff;font-weight:700;font-family:'Liberation Sans', sans-serif;">P</div>
<div class="t" style="left:1193px;top:149.53px;font-size:23px;color:#dcdcdc;font-weight:400;font-family:'Liberation Sans', sans-serif;">body</div>
<div class="a" style="left:546px;top:190px;width:2307px;height:1864px;background:#1f1f24;"></div>
<div class="a" style="left:2853px;top:190px;width:1px;height:1864px;background:#3a3a3e;"></div>
<div class="a" style="left:2854px;top:190px;width:29px;height:1864px;background:#2a2a2f;"></div>
<div class="a" style="left:2861px;top:196px;width:16px;height:1319px;background:#9a9a9c;border-radius:8px"></div>
<div class="a" style="left:2883px;top:190px;width:2px;height:1866px;background:#000;"></div>
<div class="a" style="left:561px;top:720px;width:12px;height:912px;background:#17457d;border:2px solid #0a84ff;border-radius:6px"></div>
<div class="a" style="left:561px;top:1824px;width:12px;height:48px;background:#17457d;border:2px solid #0a84ff;border-radius:6px"></div>
<div class="a" style="left:666px;top:192px;width:18px;height:288px;background:#303036;border-radius:9px"></div>
<div class="a" style="left:666px;top:624px;width:18px;height:1104px;background:#3a3a40;border-radius:9px"></div>
<div class="a" style="left:666px;top:672px;width:18px;height:1008px;background:#48484e;border-radius:9px"></div>
<div class="a" style="left:666px;top:720px;width:18px;height:912px;background:#58585d;border-radius:9px"></div>
<div class="a" style="left:666px;top:768px;width:18px;height:768px;background:#68686c;border-radius:9px"></div>
<div class="a" style="left:666px;top:816px;width:18px;height:624px;background:#79797b;border-radius:9px"></div>
<div class="a" style="left:666px;top:1776px;width:18px;height:144px;background:#3a3a40;border-radius:9px"></div>
<div class="a" style="left:546px;top:1296px;width:2307px;height:48px;background:rgba(170,170,212,0.265);"></div>
<div class="t" style="left:560px;width:94px;text-align:right;top:199.38px;font-size:35px;letter-spacing:-2.2px;color:#7c7c7e;-webkit-text-stroke:0.45px #7c7c7e">1</div>
<div class="t" style="left:710px;top:197.74px;font-family:'Liberation Mono', monospace;font-size:39.5px;letter-spacing:-1.474px;-webkit-text-stroke:0.3px currentColor"><span style="color:#7f8c98;">//</span></div>
<div class="t" style="left:560px;width:94px;text-align:right;top:247.38px;font-size:35px;letter-spacing:-2.2px;color:#7c7c7e;-webkit-text-stroke:0.45px #7c7c7e">2</div>
<div class="t" style="left:710px;top:245.74px;font-family:'Liberation Mono', monospace;font-size:39.5px;letter-spacing:-1.474px;-webkit-text-stroke:0.3px currentColor"><span style="color:#7f8c98;">//  AlarmsView.swift</span></div>
<div class="t" style="left:560px;width:94px;text-align:right;top:295.38px;font-size:35px;letter-spacing:-2.2px;color:#7c7c7e;-webkit-text-stroke:0.45px #7c7c7e">3</div>
<div class="t" style="left:710px;top:293.74px;font-family:'Liberation Mono', monospace;font-size:39.5px;letter-spacing:-1.474px;-webkit-text-stroke:0.3px currentColor"><span style="color:#7f8c98;">//  Clock</span></div>
<div class="t" style="left:560px;width:94px;text-align:right;top:343.38px;font-size:35px;letter-spacing:-2.2px;color:#7c7c7e;-webkit-text-stroke:0.45px #7c7c7e">4</div>
<div class="t" style="left:710px;top:341.74px;font-family:'Liberation Mono', monospace;font-size:39.5px;letter-spacing:-1.474px;-webkit-text-stroke:0.3px currentColor"><span style="color:#7f8c98;">//</span></div>
<div class="t" style="left:560px;width:94px;text-align:right;top:391.38px;font-size:35px;letter-spacing:-2.2px;color:#7c7c7e;-webkit-text-stroke:0.45px #7c7c7e">5</div>
<div class="t" style="left:710px;top:389.74px;font-family:'Liberation Mono', monospace;font-size:39.5px;letter-spacing:-1.474px;-webkit-text-stroke:0.3px currentColor"><span style="color:#7f8c98;">//  Created by Russell Gordon on 2024-11-08.</span></div>
<div class="t" style="left:560px;width:94px;text-align:right;top:439.38px;font-size:35px;letter-spacing:-2.2px;color:#7c7c7e;-webkit-text-stroke:0.45px #7c7c7e">6</div>
<div class="t" style="left:710px;top:437.74px;font-family:'Liberation Mono', monospace;font-size:39.5px;letter-spacing:-1.474px;-webkit-text-stroke:0.3px currentColor"><span style="color:#7f8c98;">//</span></div>
<div class="t" style="left:560px;width:94px;text-align:right;top:487.38px;font-size:35px;letter-spacing:-2.2px;color:#7c7c7e;-webkit-text-stroke:0.45px #7c7c7e">7</div>
<div class="t" style="left:560px;width:94px;text-align:right;top:535.38px;font-size:35px;letter-spacing:-2.2px;color:#7c7c7e;-webkit-text-stroke:0.45px #7c7c7e">8</div>
<div class="t" style="left:710px;top:533.74px;font-family:'Liberation Mono', monospace;font-size:39.5px;letter-spacing:-1.474px;-webkit-text-stroke:0.3px currentColor"><span style="color:#fa52a2;font-weight:700;-webkit-text-stroke:0;">import</span><span style="color:#f4f4f4;"> SwiftUI</span></div>
<div class="t" style="left:560px;width:94px;text-align:right;top:583.38px;font-size:35px;letter-spacing:-2.2px;color:#7c7c7e;-webkit-text-stroke:0.45px #7c7c7e">9</div>
<div class="t" style="left:560px;width:94px;text-align:right;top:631.38px;font-size:35px;letter-spacing:-2.2px;color:#7c7c7e;-webkit-text-stroke:0.45px #7c7c7e">10</div>
<div class="t" style="left:710px;top:629.74px;font-family:'Liberation Mono', monospace;font-size:39.5px;letter-spacing:-1.474px;-webkit-text-stroke:0.3px currentColor"><span style="color:#fa52a2;font-weight:700;-webkit-text-stroke:0;">struct</span><span style="color:#f4f4f4;"> </span><span style="color:#6bdfff;">AlarmsView</span><span style="color:#f4f4f4;">: </span><span style="color:#dabaff;">View</span><span style="color:#f4f4f4;"> {</span></div>
<div class="t" style="left:560px;width:94px;text-align:right;top:679.38px;font-size:35px;letter-spacing:-2.2px;color:#7c7c7e;-webkit-text-stroke:0.45px #7c7c7e">11</div>
<div class="t" style="left:710px;top:677.74px;font-family:'Liberation Mono', monospace;font-size:39.5px;letter-spacing:-1.474px;-webkit-text-stroke:0.3px currentColor"><span style="color:#f4f4f4;">    </span><span style="color:#fa52a2;font-weight:700;-webkit-text-stroke:0;">var</span><span style="color:#f4f4f4;"> </span><span style="color:#40b6dc;">body</span><span style="color:#f4f4f4;">: </span><span style="color:#fa52a2;font-weight:700;-webkit-text-stroke:0;">some</span><span style="color:#f4f4f4;"> </span><span style="color:#dabaff;">View</span><span style="color:#f4f4f4;"> {</span></div>
<div class="t" style="left:560px;width:94px;text-align:right;top:727.38px;font-size:35px;letter-spacing:-2.2px;color:#7c7c7e;-webkit-text-stroke:0.45px #7c7c7e">12</div>
<div class="t" style="left:710px;top:725.74px;font-family:'Liberation Mono', monospace;font-size:39.5px;letter-spacing:-1.474px;-webkit-text-stroke:0.3px currentColor"><span style="color:#f4f4f4;">        </span><span style="color:#dabaff;">NavigationStack</span><span style="color:#f4f4f4;"> {</span></div>
<div class="t" style="left:560px;width:94px;text-align:right;top:775.38px;font-size:35px;letter-spacing:-2.2px;color:#7c7c7e;-webkit-text-stroke:0.45px #7c7c7e">13</div>
<div class="t" style="left:710px;top:773.74px;font-family:'Liberation Mono', monospace;font-size:39.5px;letter-spacing:-1.474px;-webkit-text-stroke:0.3px currentColor"><span style="color:#f4f4f4;">            </span><span style="color:#dabaff;">VStack</span><span style="color:#f4f4f4;"> {</span></div>
<div class="t" style="left:560px;width:94px;text-align:right;top:823.38px;font-size:35px;letter-spacing:-2.2px;color:#7c7c7e;-webkit-text-stroke:0.45px #7c7c7e">14</div>
<div class="t" style="left:710px;top:821.74px;font-family:'Liberation Mono', monospace;font-size:39.5px;letter-spacing:-1.474px;-webkit-text-stroke:0.3px currentColor"><span style="color:#f4f4f4;">                </span><span style="color:#dabaff;">HStack</span><span style="color:#f4f4f4;"> {</span></div>
<div class="t" style="left:560px;width:94px;text-align:right;top:871.38px;font-size:35px;letter-spacing:-2.2px;color:#7c7c7e;-webkit-text-stroke:0.45px #7c7c7e">15</div>
<div class="t" style="left:710px;top:869.74px;font-family:'Liberation Mono', monospace;font-size:39.5px;letter-spacing:-1.474px;-webkit-text-stroke:0.3px currentColor"><span style="color:#f4f4f4;">                    </span><span style="color:#7f8c98;">// Left side</span></div>
<div class="t" style="left:560px;width:94px;text-align:right;top:919.38px;font-size:35px;letter-spacing:-2.2px;color:#7c7c7e;-webkit-text-stroke:0.45px #7c7c7e">16</div>
<div class="t" style="left:710px;top:917.74px;font-family:'Liberation Mono', monospace;font-size:39.5px;letter-spacing:-1.474px;-webkit-text-stroke:0.3px currentColor"><span style="color:#f4f4f4;">                    </span><span style="color:#dabaff;">Text</span><span style="color:#f4f4f4;">(</span><span style="color:#fc6a5d;">&quot;7:30&quot;</span><span style="color:#f4f4f4;">)</span></div>
<div class="t" style="left:560px;width:94px;text-align:right;top:967.38px;font-size:35px;letter-spacing:-2.2px;color:#7c7c7e;-webkit-text-stroke:0.45px #7c7c7e">17</div>
<div class="t" style="left:710px;top:965.74px;font-family:'Liberation Mono', monospace;font-size:39.5px;letter-spacing:-1.474px;-webkit-text-stroke:0.3px currentColor"><span style="color:#f4f4f4;">                        .</span><span style="color:#b281eb;">font</span><span style="color:#f4f4f4;">(.</span><span style="color:#b281eb;">system</span><span style="color:#f4f4f4;">(</span><span style="color:#b281eb;">size</span><span style="color:#f4f4f4;">: </span><span style="color:#f5e085;">64.0</span><span style="color:#f4f4f4;">, </span><span style="color:#b281eb;">weight</span><span style="color:#f4f4f4;">: .</span><span style="color:#b281eb;">thin</span><span style="color:#f4f4f4;">, </span><span style="color:#b281eb;">design</span><span style="color:#f4f4f4;">: .</span><span style="color:#b281eb;">default</span><span style="color:#f4f4f4;">))</span></div>
<div class="t" style="left:560px;width:94px;text-align:right;top:1015.38px;font-size:35px;letter-spacing:-2.2px;color:#7c7c7e;-webkit-text-stroke:0.45px #7c7c7e">18</div>
<div class="t" style="left:710px;top:1013.74px;font-family:'Liberation Mono', monospace;font-size:39.5px;letter-spacing:-1.474px;-webkit-text-stroke:0.3px currentColor"><span style="color:#f4f4f4;">                    </span><span style="color:#dabaff;">Text</span><span style="color:#f4f4f4;">(</span><span style="color:#fc6a5d;">&quot;AM&quot;</span><span style="color:#f4f4f4;">)</span></div>
<div class="t" style="left:560px;width:94px;text-align:right;top:1063.38px;font-size:35px;letter-spacing:-2.2px;color:#7c7c7e;-webkit-text-stroke:0.45px #7c7c7e">19</div>
<div class="t" style="left:710px;top:1061.74px;font-family:'Liberation Mono', monospace;font-size:39.5px;letter-spacing:-1.474px;-webkit-text-stroke:0.3px currentColor"><span style="color:#f4f4f4;">                        .</span><span style="color:#b281eb;">font</span><span style="color:#f4f4f4;">(.</span><span style="color:#b281eb;">system</span><span style="color:#f4f4f4;">(.</span><span style="color:#b281eb;">largeTitle</span><span style="color:#f4f4f4;">, </span><span style="color:#b281eb;">design</span><span style="color:#f4f4f4;">: .</span><span style="color:#b281eb;">default</span><span style="color:#f4f4f4;">, </span><span style="color:#b281eb;">weight</span><span style="color:#f4f4f4;">: .</span><span style="color:#b281eb;">thin</span><span style="color:#f4f4f4;">))</span></div>
<div class="t" style="left:560px;width:94px;text-align:right;top:1111.38px;font-size:35px;letter-spacing:-2.2px;color:#7c7c7e;-webkit-text-stroke:0.45px #7c7c7e">20</div>
<div class="t" style="left:560px;width:94px;text-align:right;top:1159.38px;font-size:35px;letter-spacing:-2.2px;color:#7c7c7e;-webkit-text-stroke:0.45px #7c7c7e">21</div>
<div class="t" style="left:710px;top:1157.74px;font-family:'Liberation Mono', monospace;font-size:39.5px;letter-spacing:-1.474px;-webkit-text-stroke:0.3px currentColor"><span style="color:#f4f4f4;">                    </span><span style="color:#dabaff;">Spacer</span><span style="color:#f4f4f4;">()</span></div>
<div class="t" style="left:560px;width:94px;text-align:right;top:1207.38px;font-size:35px;letter-spacing:-2.2px;color:#7c7c7e;-webkit-text-stroke:0.45px #7c7c7e">22</div>
<div class="t" style="left:560px;width:94px;text-align:right;top:1255.38px;font-size:35px;letter-spacing:-2.2px;color:#7c7c7e;-webkit-text-stroke:0.45px #7c7c7e">23</div>
<div class="t" style="left:710px;top:1253.74px;font-family:'Liberation Mono', monospace;font-size:39.5px;letter-spacing:-1.474px;-webkit-text-stroke:0.3px currentColor"><span style="color:#f4f4f4;">                    </span><span style="color:#7f8c98;">// Right side</span></div>
<div class="t" style="left:560px;width:94px;text-align:right;top:1303.38px;font-size:35px;letter-spacing:-2.2px;color:#ffffff;-webkit-text-stroke:0.7px #fff">24</div>
<div class="t" style="left:710px;top:1301.74px;font-family:'Liberation Mono', monospace;font-size:39.5px;letter-spacing:-1.474px;-webkit-text-stroke:0.3px currentColor"><span style="color:#f4f4f4;">                    </span><span style="color:#dabaff;">Toggle</span><span style="color:#f4f4f4;">(</span><span style="color:#fc6a5d;">&quot;&quot;</span><span style="color:#f4f4f4;">, </span><span style="color:#b281eb;">isOn</span><span style="color:#f4f4f4;">: </span><span style="color:#dabaff;">Binding</span><span style="color:#f4f4f4;">.</span><span style="color:#b281eb;">constant</span><span style="color:#f4f4f4;">(</span><span style="color:#fa52a2;font-weight:700;-webkit-text-stroke:0;">true</span><span style="color:#f4f4f4;">))</span></div>
<div class="t" style="left:560px;width:94px;text-align:right;top:1351.38px;font-size:35px;letter-spacing:-2.2px;color:#7c7c7e;-webkit-text-stroke:0.45px #7c7c7e">25</div>
<div class="t" style="left:560px;width:94px;text-align:right;top:1399.38px;font-size:35px;letter-spacing:-2.2px;color:#7c7c7e;-webkit-text-stroke:0.45px #7c7c7e">26</div>
<div class="t" style="left:710px;top:1397.74px;font-family:'Liberation Mono', monospace;font-size:39.5px;letter-spacing:-1.474px;-webkit-text-stroke:0.3px currentColor"><span style="color:#f4f4f4;">                }</span></div>
<div class="t" style="left:560px;width:94px;text-align:right;top:1447.38px;font-size:35px;letter-spacing:-2.2px;color:#7c7c7e;-webkit-text-stroke:0.45px #7c7c7e">27</div>
<div class="t" style="left:710px;top:1445.74px;font-family:'Liberation Mono', monospace;font-size:39.5px;letter-spacing:-1.474px;-webkit-text-stroke:0.3px currentColor"><span style="color:#f4f4f4;">                .</span><span style="color:#b281eb;">padding</span><span style="color:#f4f4f4;">()</span></div>
<div class="t" style="left:560px;width:94px;text-align:right;top:1495.38px;font-size:35px;letter-spacing:-2.2px;color:#7c7c7e;-webkit-text-stroke:0.45px #7c7c7e">28</div>
<div class="t" style="left:710px;top:1493.74px;font-family:'Liberation Mono', monospace;font-size:39.5px;letter-spacing:-1.474px;-webkit-text-stroke:0.3px currentColor"><span style="color:#f4f4f4;">            }</span></div>
<div class="t" style="left:560px;width:94px;text-align:right;top:1543.38px;font-size:35px;letter-spacing:-2.2px;color:#7c7c7e;-webkit-text-stroke:0.45px #7c7c7e">29</div>
<div class="t" style="left:710px;top:1541.74px;font-family:'Liberation Mono', monospace;font-size:39.5px;letter-spacing:-1.474px;-webkit-text-stroke:0.3px currentColor"><span style="color:#f4f4f4;">                .</span><span style="color:#b281eb;">navigationTitle</span><span style="color:#f4f4f4;">(</span><span style="color:#fc6a5d;">&quot;Alarms&quot;</span><span style="color:#f4f4f4;">)</span></div>
<div class="t" style="left:560px;width:94px;text-align:right;top:1591.38px;font-size:35px;letter-spacing:-2.2px;color:#7c7c7e;-webkit-text-stroke:0.45px #7c7c7e">30</div>
<div class="t" style="left:710px;top:1589.74px;font-family:'Liberation Mono', monospace;font-size:39.5px;letter-spacing:-1.474px;-webkit-text-stroke:0.3px currentColor"><span style="color:#f4f4f4;">        }</span></div>
<div class="t" style="left:560px;width:94px;text-align:right;top:1639.38px;font-size:35px;letter-spacing:-2.2px;color:#7c7c7e;-webkit-text-stroke:0.45px #7c7c7e">31</div>
<div class="t" style="left:710px;top:1637.74px;font-family:'Liberation Mono', monospace;font-size:39.5px;letter-spacing:-1.474px;-webkit-text-stroke:0.3px currentColor"><span style="color:#f4f4f4;">    }</span></div>
<div class="t" style="left:560px;width:94px;text-align:right;top:1687.38px;font-size:35px;letter-spacing:-2.2px;color:#7c7c7e;-webkit-text-stroke:0.45px #7c7c7e">32</div>
<div class="t" style="left:710px;top:1685.74px;font-family:'Liberation Mono', monospace;font-size:39.5px;letter-spacing:-1.474px;-webkit-text-stroke:0.3px currentColor"><span style="color:#f4f4f4;">}</span></div>
<div class="t" style="left:560px;width:94px;text-align:right;top:1735.38px;font-size:35px;letter-spacing:-2.2px;color:#7c7c7e;-webkit-text-stroke:0.45px #7c7c7e">33</div>
<div class="t" style="left:560px;width:94px;text-align:right;top:1783.38px;font-size:35px;letter-spacing:-2.2px;color:#7c7c7e;-webkit-text-stroke:0.45px #7c7c7e">34</div>
<div class="t" style="left:710px;top:1781.74px;font-family:'Liberation Mono', monospace;font-size:39.5px;letter-spacing:-1.474px;-webkit-text-stroke:0.3px currentColor"><span style="color:#b281eb;">#Preview</span><span style="color:#f4f4f4;"> {</span></div>
<div class="t" style="left:560px;width:94px;text-align:right;top:1831.38px;font-size:35px;letter-spacing:-2.2px;color:#7c7c7e;-webkit-text-stroke:0.45px #7c7c7e">35</div>
<div class="t" style="left:710px;top:1829.74px;font-family:'Liberation Mono', monospace;font-size:39.5px;letter-spacing:-1.474px;-webkit-text-stroke:0.3px currentColor"><span style="color:#f4f4f4;">    </span><span style="color:#9ef1dd;">LandingView</span><span style="color:#f4f4f4;">()</span></div>
<div class="t" style="left:560px;width:94px;text-align:right;top:1879.38px;font-size:35px;letter-spacing:-2.2px;color:#7c7c7e;-webkit-text-stroke:0.45px #7c7c7e">36</div>
<div class="t" style="left:710px;top:1877.74px;font-family:'Liberation Mono', monospace;font-size:39.5px;letter-spacing:-1.474px;-webkit-text-stroke:0.3px currentColor"><span style="color:#f4f4f4;">}</span></div>
<div class="t" style="left:560px;width:94px;text-align:right;top:1927.38px;font-size:35px;letter-spacing:-2.2px;color:#7c7c7e;-webkit-text-stroke:0.45px #7c7c7e">37</div>
<div class="a" style="left:2885px;top:190px;width:955px;height:1864px;background:#545b65;"></div>
<div class="a" style="left:2909px;top:214px;width:62px;height:52px;background:#333333;border:1px solid #55585d;border-radius:12px;box-shadow:0 1px 2px rgba(0,0,0,0.2)"></div>
<svg class="a" style="left:2925px;top:224px;" width="30" height="32" viewBox="0 0 30 32"><path d="M8 4 L22 4 M10 4 L12 14 M20 4 L18 14 M6 21 C6 16 10 14 15 14 C20 14 24 16 24 21 Z" fill="none" stroke="#ececec" stroke-width="2" stroke-linejoin="round"/><line x1="15" y1="21" x2="15" y2="30" stroke="#ececec" stroke-width="2"/></svg>
<div class="a" style="left:2992px;top:214px;width:189px;height:52px;background:#5a7da8;border:1px solid #6f93c0;border-radius:12px"></div>
<svg class="a" style="left:3006px;top:224px;" width="30" height="32" viewBox="0 0 30 32"><rect x="5" y="10" width="22" height="18" rx="3.5" fill="none" stroke="#ffffff" stroke-width="2"/><line x1="9" y1="6.5" x2="23" y2="6.5" stroke="#ffffff" stroke-width="1.6"/><line x1="11" y1="3.5" x2="21" y2="3.5" stroke="#ffffff" stroke-width="1.4"/></svg>
<div class="t" style="left:3044px;top:228.68px;font-size:24px;color:#ffffff;font-weight:400;font-family:'Liberation Sans', sans-serif;letter-spacing:-0.5px;-webkit-text-stroke:0.35px #fff">AlarmsView</div>
<div class="a" style="left:3035px;top:690px;width:9px;height:46px;background:#2e2e2e;border-top:1px solid #6a6a6a"></div>
<div class="a" style="left:3035px;top:780px;width:9px;height:90px;background:#2e2e2e;border-top:1px solid #6a6a6a"></div>
<div class="a" style="left:3035px;top:896px;width:9px;height:91px;background:#2e2e2e;border-top:1px solid #6a6a6a"></div>
<div class="a" style="left:3681px;top:841px;width:8px;height:144px;background:#2e2e2e;border-top:1px solid #6a6a6a"></div>
<div class="a" style="left:3043px;top:455px;width:639px;height:1333px;background:#2c2c2c;border:1.5px solid #7a7a7a;border-radius:126px"></div>
<div class="a" style="left:3052px;top:464px;width:620px;height:1316px;background:#000;border-radius:117px"></div>
<div class="t" style="left:3089px;top:636.67px;font-size:50px;color:#ffffff;font-weight:700;font-family:'Liberation Sans', sans-serif;letter-spacing:-0.8px;-webkit-text-stroke-width:0">Alarms</div>
<svg class="a" style="left:3080px;top:1120px;" width="280" height="100" viewBox="0 0 280 100"><g fill="none" stroke="#ffffff" stroke-width="3.4" stroke-linecap="butt"><path d="M14 21.6 L55 21.6 L22.5 86.5" stroke-linejoin="miter"/><path d="M81.5 37 C81.5 26 90 20.7 102 20.7 C114 20.7 121.5 27 121.5 35.5 C121.5 45 114 52 102 52 L93.5 52 M102 52 C116 52 123 60 123 69 C123 79.5 114 85.8 102 85.8 C89 85.8 81 79 80.5 69.5"/><ellipse cx="156.3" cy="53.2" rx="21.8" ry="32.7"/></g><g fill="#ffffff"><circle cx="65.8" cy="33" r="3.3"/><circle cx="65.8" cy="73.4" r="3.3"/></g><g fill="none" stroke="#ffffff" stroke-width="2.4"><path d="M197.5 71 L211 36 L224.5 71 M203 58.7 L219 58.7"/><path d="M230.5 71.2 L230.5 36 L246.3 71 L262 36 L262 71.2"/></g></svg>
<div class="a" style="left:3562px;top:1151px;width:76px;height:45px;background:#ff9f0a;border-radius:23px"></div>
<div class="a" style="left:3595.5px;top:1153.5px;width:40px;height:40px;background:#ffffff;border-radius:50%;box-shadow:-1px 2px 4px rgba(0,0,0,0.2)"></div>
<svg class="a" style="left:3140px;top:1645px;" width="50" height="50" viewBox="0 0 50 50"><g fill="none" stroke="#8e8e8e" stroke-width="1.9"><circle cx="24.25" cy="26.4" r="16.2"/><ellipse cx="24.25" cy="26.4" rx="7.4" ry="16.2"/><line x1="24.25" y1="10.2" x2="24.25" y2="42.6"/><line x1="8" y1="26.4" x2="40.5" y2="26.4"/><path d="M12.2 16.9 Q24.25 20.9 36.3 16.9 M12.5 35.9 Q24.25 30.1 36 35.9"/></g></svg>
<div class="t" style="left:3164px;top:1696.88px;font-size:15.5px;color:#8e8e8e;font-weight:400;font-family:'Liberation Sans', sans-serif;transform:translateX(-50%);-webkit-text-stroke:0.3px #8e8e8e">World Clock</div>
<svg class="a" style="left:3335px;top:1645px;" width="52" height="52" viewBox="0 0 52 52"><circle cx="15.5" cy="11" r="5.3" fill="#ff9f0a"/><circle cx="36.5" cy="11" r="5.3" fill="#ff9f0a"/><circle cx="26" cy="26" r="18.2" fill="#000"/><circle cx="26" cy="26" r="16.2" fill="#ff9f0a"/><path d="M26 15.5 L26 26.5 L18.5 26.5" fill="none" stroke="#000" stroke-width="2.6"/><path d="M17.5 40.5 L14.5 43 M34.5 40.5 L37.5 43" stroke="#ff9f0a" stroke-width="2.8" stroke-linecap="round"/></svg>
<div class="t" style="left:3361px;top:1696.88px;font-size:15.5px;color:#ff9f0a;font-weight:400;font-family:'Liberation Sans', sans-serif;transform:translateX(-50%);-webkit-text-stroke:0.3px #ff9f0a">Alarm</div>
<svg class="a" style="left:3533px;top:1645px;" width="52" height="52" viewBox="0 0 52 52"><circle cx="26" cy="28" r="17" fill="#8e8e8e"/><rect x="24.5" y="5" width="3" height="6" fill="#8e8e8e"/><path d="M38 13 L41 10" stroke="#8e8e8e" stroke-width="3"/><line x1="26" y1="17" x2="26" y2="28" stroke="#000" stroke-width="2.5"/><circle cx="26" cy="29" r="3" fill="#000"/></svg>
<div class="t" style="left:3559px;top:1696.88px;font-size:15.5px;color:#8e8e8e;font-weight:400;font-family:'Liberation Sans', sans-serif;transform:translateX(-50%);-webkit-text-stroke:0.3px #8e8e8e">Stopwatch</div>
<div class="a" style="left:2910px;top:1978px;width:161px;height:51px;background:#363636;border:1px solid #5d6066;border-radius:14px;box-shadow:0 1px 2px rgba(0,0,0,0.25)"></div>
<div class="a" style="left:3092px;top:1978px;width:63px;height:51px;background:#363636;border:1px solid #5d6066;border-radius:14px;box-shadow:0 1px 2px rgba(0,0,0,0.25)"></div>
<div class="a" style="left:3176px;top:1978px;width:364px;height:51px;background:#363636;border:1px solid #5d6066;border-radius:14px;box-shadow:0 1px 2px rgba(0,0,0,0.25)"></div>
<div class="a" style="left:3609px;top:1978px;width:206px;height:51px;background:#363636;border:1px solid #5d6066;border-radius:14px;box-shadow:0 1px 2px rgba(0,0,0,0.25)"></div>
<svg class="a" style="left:2920px;top:1984px;" width="145" height="40" viewBox="0 0 145 40"><circle cx="19.6" cy="20" r="13.3" fill="#0a84ff"/><path d="M16.5 14.5 L24.5 20 L16.5 25.5 Z" fill="#333" stroke="#333" stroke-width="1" stroke-linejoin="round"/><rect x="56" y="9.5" width="22" height="22" rx="2" fill="none" stroke="#d6d6d6" stroke-width="2"/><path d="M62 14 L62 26 L65 23 L68 28 L70 27 L67.5 22 L71.5 22 Z" fill="#d6d6d6"/><g fill="none" stroke="#d6d6d6" stroke-width="1.8"><rect x="109" y="12" width="5" height="6" rx="1"/><rect x="117" y="12" width="5" height="6" rx="1"/><rect x="125" y="12" width="5" height="6" rx="1"/><rect x="109" y="22" width="5" height="6" rx="1"/><rect x="117" y="22" width="5" height="6" rx="1"/><rect x="125" y="22" width="5" height="6" rx="1"/></g></svg>
<svg class="a" style="left:3103px;top:1984px;" width="40" height="40" viewBox="0 0 40 40"><rect x="6" y="9" width="26" height="10" rx="5" fill="none" stroke="#d6d6d6" stroke-width="2"/><circle cx="11" cy="14" r="3" fill="#d6d6d6"/><rect x="6" y="22" width="26" height="11" rx="5.5" fill="#d6d6d6"/><circle cx="27" cy="27.5" r="3.5" fill="#363636"/></svg>
<svg class="a" style="left:3190px;top:1990px;" width="24" height="30" viewBox="0 0 24 30"><rect x="4" y="2.5" width="14" height="24" rx="3" fill="none" stroke="#bdbdbd" stroke-width="2"/><line x1="9" y1="22.5" x2="13" y2="22.5" stroke="#bdbdbd" stroke-width="1.3"/></svg>
<div class="t" style="left:3222px;top:1991.26px;font-size:24.5px;color:#e6e6e6;font-weight:400;font-family:'Liberation Sans', sans-serif;letter-spacing:-0.7px">Automatic – iPhone 16 Pro</div>
<svg class="a" style="left:3508px;top:1994px;" width="24" height="20" viewBox="0 0 24 20"><path d="M5 7 L12 14 L19 7" fill="none" stroke="#d6d6d6" stroke-width="2.5"/></svg>
<svg class="a" style="left:3620px;top:1984px;" width="190" height="40" viewBox="0 0 190 40"><g fill="none" stroke="#d6d6d6" stroke-width="2.2"><circle cx="16.5" cy="18" r="9"/><line x1="23" y1="24.5" x2="29" y2="30.5" stroke-width="3" stroke-linecap="round"/><line x1="12" y1="18" x2="21" y2="18"/><circle cx="65" cy="18" r="9"/><line x1="71.5" y1="24.5" x2="77.5" y2="30.5" stroke-width="3" stroke-linecap="round"/><path d="M63 14.5 L65.5 13 L65.5 23" stroke-width="1.8"/><circle cx="113" cy="18" r="9"/><line x1="119.5" y1="24.5" x2="125.5" y2="30.5" stroke-width="3" stroke-linecap="round"/><rect x="109" y="14" width="8" height="8" rx="1" stroke-width="1.8"/><circle cx="161.5" cy="18" r="9"/><line x1="168" y1="24.5" x2="174" y2="30.5" stroke-width="3" stroke-linecap="round"/><path d="M157 18 L166 18 M161.5 13.5 L161.5 22.5"/></g></svg>
<div class="a" style="left:546px;top:2054px;width:3294px;height:2px;background:#000;"></div>
<div class="a" style="left:546px;top:2056px;width:3294px;height:54px;background:#1e1e1e;"></div>
<svg class="a" style="left:565px;top:2070px;" width="40" height="26" viewBox="0 0 40 26"><path d="M4 6 Q4 4 6 4 L27 4 L33 13 L27 22 L6 22 Q4 22 4 20 Z" fill="#0a84ff"/></svg>
<div class="t" style="left:3577px;top:2070.68px;font-size:24px;color:#9c9c9c;font-weight:400;font-family:'Liberation Sans', sans-serif;letter-spacing:-0.1px;-webkit-text-stroke-width:0.9px">Line: 24&nbsp;&nbsp;Col: 21</div>
<div class="a" style="left:3770px;top:2072px;width:2px;height:22px;background:#3a3a3a;"></div>
<svg class="a" style="left:3786px;top:2066px;" width="32" height="32" viewBox="0 0 32 32"><rect x="3" y="4" width="26" height="24" rx="4" fill="none" stroke="#a8a8a8" stroke-width="2"/><rect x="7" y="19" width="18" height="5" rx="1" fill="#a8a8a8"/></svg>
<svg class="a" style="left:0px;top:0px" width="16" height="16" viewBox="0 0 16 16"><g transform="rotate(0 8.0 8.0)"><path d="M0 0 L16 0 A16 16 0 0 0 0 16 Z" fill="#000"/><path d="M16 1 A15 15 0 0 0 1 16" fill="none" stroke="#6a6a6a" stroke-width="1.5"/></g></svg>
<svg class="a" style="left:3824px;top:0px" width="16" height="16" viewBox="0 0 16 16"><g transform="rotate(90 8.0 8.0)"><path d="M0 0 L16 0 A16 16 0 0 0 0 16 Z" fill="#000"/><path d="M16 1 A15 15 0 0 0 1 16" fill="none" stroke="#6a6a6a" stroke-width="1.5"/></g></svg>
<svg class="a" style="left:3824px;top:2094px" width="16" height="16" viewBox="0 0 16 16"><g transform="rotate(180 8.0 8.0)"><path d="M0 0 L16 0 A16 16 0 0 0 0 16 Z" fill="#000"/></g></svg>
<svg class="a" style="left:0px;top:2094px" width="16" height="16" viewBox="0 0 16 16"><g transform="rotate(270 8.0 8.0)"><path d="M0 0 L16 0 A16 16 0 0 0 0 16 Z" fill="#000"/></g></svg>
<div class="a" style="left:16px;top:0px;width:3808px;height:1px;background:#6a6a6a;"></div>
</div></body></html>
